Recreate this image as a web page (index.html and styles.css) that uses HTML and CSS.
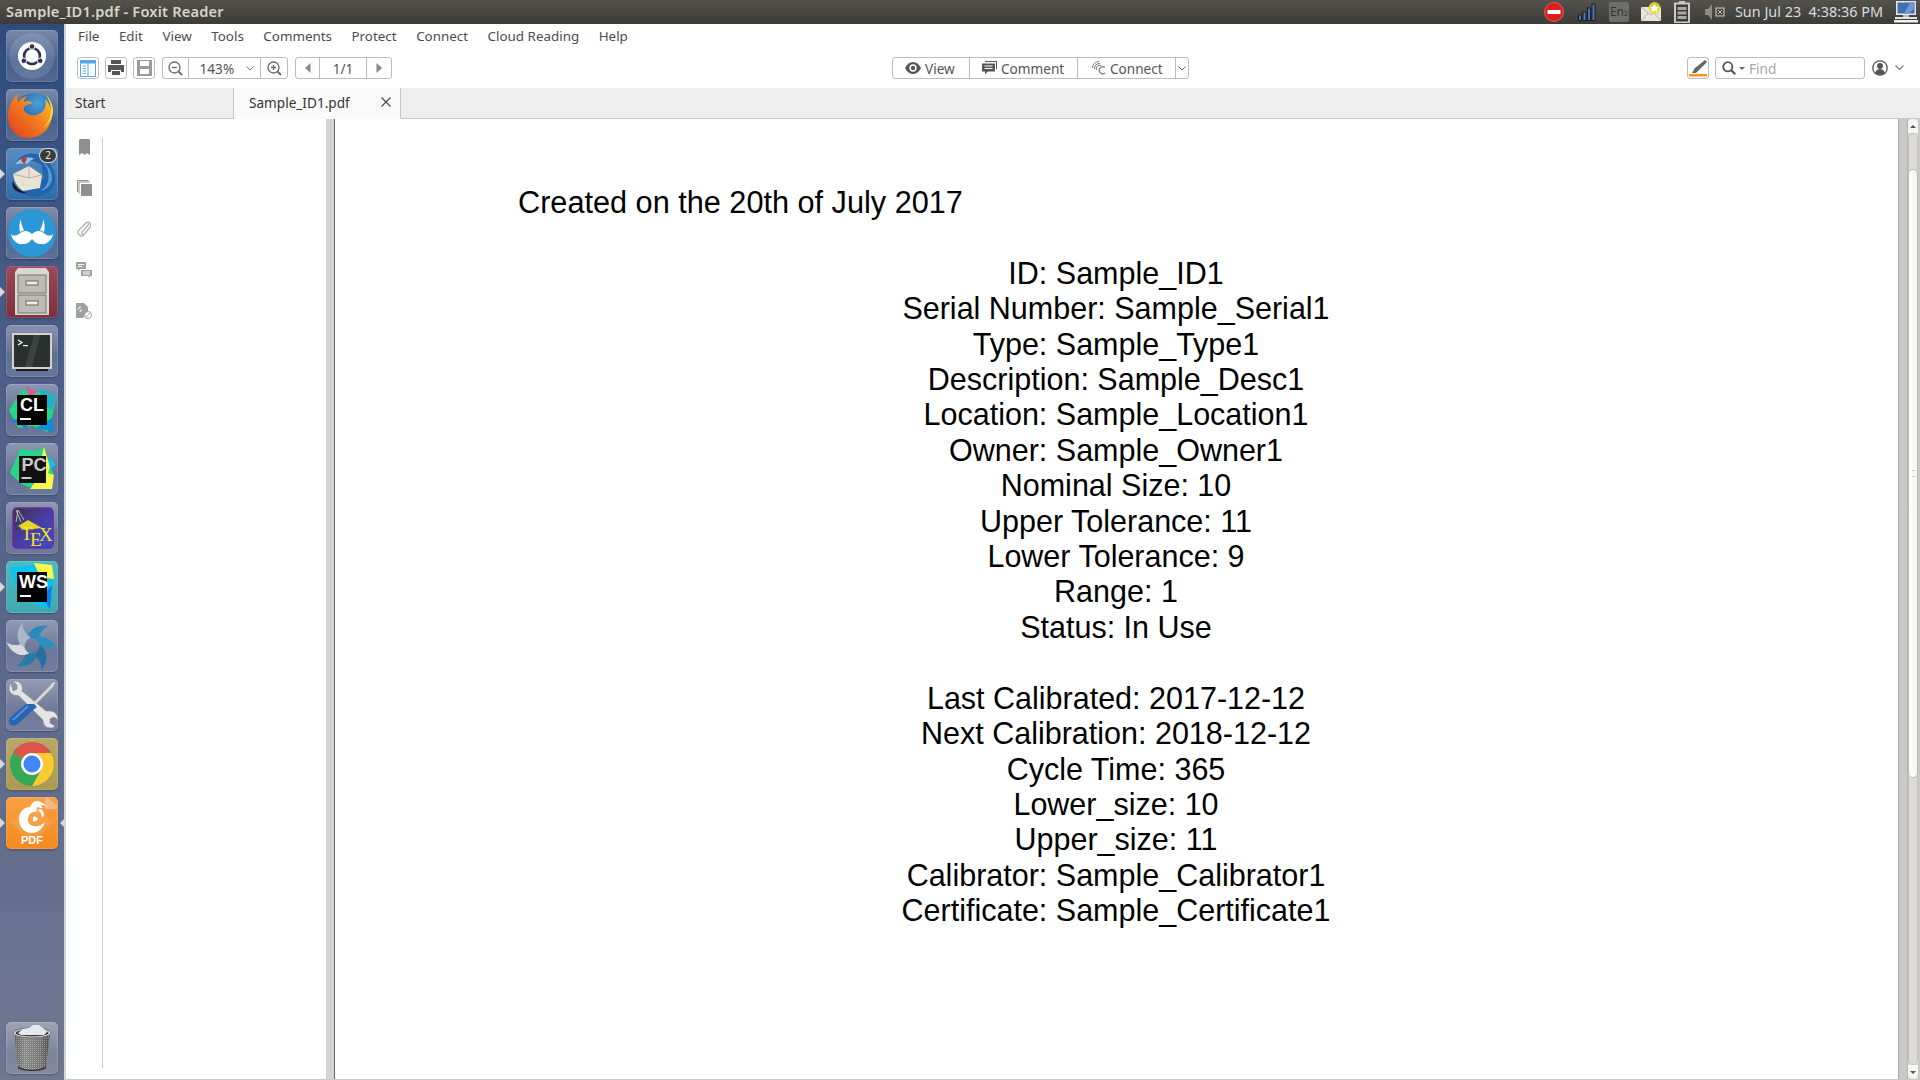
FILE: index.html
```html
<!DOCTYPE html>
<html lang="en">
<head>
<meta charset="utf-8">
<title>Sample_ID1.pdf - Foxit Reader</title>
<link rel="stylesheet" href="styles.css">
</head>
<body>
<header class="topbar">
  <div class="win-title">Sample_ID1.pdf - Foxit Reader</div>
  <div class="tray">
    <svg class="t-red" width="20" height="20" viewBox="0 0 20 20"><circle cx="10" cy="10" r="9.5" fill="#d9201f"/><circle cx="10" cy="10" r="9.5" fill="none" stroke="#f06a60" stroke-width=".8"/><rect x="3.5" y="8" width="13" height="4" fill="#fff"/></svg>
    <svg class="t-signal" width="18" height="18" viewBox="0 0 18 18"><g fill="#4a76b8" stroke="#101010" stroke-width=".8"><rect x=".5" y="12" width="3" height="5.5"/><rect x="5" y="9" width="3" height="8.5"/><rect x="9.5" y="5" width="3" height="12.5"/><rect x="14" y="1" width="3" height="16.5"/></g></svg>
    <div class="t-lang">En<span class="t-sub">2</span></div>
    <svg class="t-mail" width="21" height="20" viewBox="0 0 21 20"><rect x="0" y="5" width="20" height="14" fill="#e9e6dc"/><path d="M0 5l10 8 10-8M0 19l7-8M20 19l-7-8" fill="none" stroke="#b5b2a6"/><circle cx="13.500" cy="6" r="6" fill="#e8e22a" opacity=".85"/><path d="M13.500 1.500l1.400 2.900 3.100.4-2.300 2.100.6 3.100-2.800-1.500-2.800 1.500.6-3.100-2.300-2.100 3.100-.4z" fill="#fff"/></svg>
    <svg class="t-batt" width="16" height="22" viewBox="0 0 16 22"><rect x="5" y="0" width="6" height="3" fill="#c9c9c5"/><rect x="1" y="2.500" width="14" height="19" fill="#3c3b37" stroke="#c9c9c5" stroke-width="2"/><g fill="#a8a8a4"><rect x="3.500" y="6" width="9" height="3"/><rect x="3.500" y="10.500" width="9" height="3"/><rect x="3.500" y="15" width="9" height="3"/></g></svg>
    <svg class="t-vol" width="20" height="16" viewBox="0 0 20 16"><path d="M0 5h3l4-5v16l-4-5H0z" fill="#8b8a85"/><rect x="11" y="4" width="8" height="8" fill="none" stroke="#bdbcb6" stroke-width="1.200"/><path d="M13 6l4 4M17 6l-4 4" stroke="#bdbcb6"/></svg>
    <div class="t-clock">Sun Jul 23&nbsp; 4:38:36 PM</div>
    <svg class="t-disp" width="24" height="22" viewBox="0 0 24 22"><rect x="2" y="0" width="20" height="14" fill="#e4e4e2"/><rect x="3.500" y="1.500" width="17" height="11" fill="#3f6eb4"/><path d="M10 12.500l6-11h4.500v6l-6 5z" fill="#6f97d2"/><rect x="9" y="14" width="6" height="2" fill="#bdbdb9"/><rect x="1" y="16" width="22" height="2" fill="#e4e4e2"/><rect x="0" y="19" width="24" height="2.500" fill="#f2f2f0"/></svg>
  </div>
</header>

<div class="desktop">
  <nav class="launcher">
    <div class="tile">
      <svg width="52" height="52" viewBox="0 0 52 52"><circle cx="26" cy="26" r="23" fill="#fff" opacity=".12"/><circle cx="26" cy="26" r="14" fill="#fff"/><circle cx="26" cy="26" r="8" fill="none" stroke="#2c3150" stroke-width="2.600"/><g fill="#2c3150" stroke="#fff" stroke-width="1"><circle cx="26" cy="16.500" r="2.800"/><circle cx="17.800" cy="30.800" r="2.800"/><circle cx="34.200" cy="30.800" r="2.800"/></g></svg>
    </div>
    <div class="tile">
      <svg width="52" height="52" viewBox="0 0 52 52"><defs><linearGradient id="ffx" x1="0" y1="1" x2="1" y2="0"><stop offset="0" stop-color="#dd3a1c"/><stop offset=".55" stop-color="#f4801f"/><stop offset="1" stop-color="#ffcf2e"/></linearGradient><radialGradient id="ffg" cx=".6" cy=".25" r=".8"><stop offset="0" stop-color="#4aa0d8"/><stop offset="1" stop-color="#12408a"/></radialGradient></defs><circle cx="28" cy="24" r="20" fill="url(#ffg)"/><path d="M12 5c-1 3-1 6 0 8 2-3 5-5 9-6-2 2-3 4-3 6 3-2 6-1 9 1-2 1-7 1-9 4-1 3 1 7 7 8 5 1 10-1 13-5 2-3 2-7 1-11 4 4 7 10 7 16 0 13-11 23-24 23C9 49 2 38 2 27 2 18 6 10 12 5z" fill="url(#ffx)"/><path d="M40 6c4 4 8 11 7 18-1 7-5 12-10 15 5-5 8-11 8-17 0-6-2-11-5-16z" fill="#ffd330"/></svg>
    </div>
    <div class="tile tile-bird pip-left">
      <div class="badge">2</div>
      <svg width="52" height="52" viewBox="0 0 52 52"><path d="M9 16C14 6 26 3 35 8c10 5 15 16 14 26-2 9-10 14-19 15-7 0-13-2-18-7l18-2 8-10-3-14-14-5z" fill="#2165ad"/><path d="M35 13c6 4 9 12 7 20-1 5-5 8-8 10 6-1 10-5 12-11 1-7-4-16-11-19z" fill="#5a9ad6"/><path d="M9 16c5-6 13-8 20-5-3 0-6 2-8 5-4-1-8 0-12 0z" fill="#8fc3ea"/><path d="M15 10c2-1 5-1 6 1-1 1-2 3-2 5l-3-2z" fill="#c23a33"/><path d="M7 26l16-8 13 9-2 13-17 3c-6-4-9-10-10-17z" fill="#e8e3d4"/><path d="M7 26l16 4 13-3M23 18v12" fill="none" stroke="#b4ae9b"/><path d="M7 33c2 6 8 11 15 12-6 1-11-1-14-4-2-3-2-5-1-8z" fill="#1d1d20"/></svg>
    </div>
    <div class="tile">
      <svg width="52" height="52" viewBox="0 0 52 52"><circle cx="26" cy="26" r="24" fill="#2b97d6"/><path d="M26 27C22 23 17 23 13 27 10 29 7 29 5 27 6 33 11 38 17 37 21 37 24 35 26 32 28 35 31 37 35 37 41 38 46 33 47 27 45 29 42 29 39 27 35 23 30 23 26 27z" fill="#fff"/><path d="M15 12C13 17 13 21 14 25L18 23C16 20 15 16 15 12zM37 12C39 17 39 21 38 25L34 23C36 20 37 16 37 12z" fill="#fff"/></svg>
    </div>
    <div class="tile tile-files pip-left">
      <svg width="52" height="52" viewBox="0 0 52 52"><path d="M12 2h28l3 4v43H9V6z" fill="#d8d8d2"/><rect x="12" y="9" width="28" height="18" fill="#bcbcb4" stroke="#77776f"/><rect x="12" y="29" width="28" height="18" fill="#bcbcb4" stroke="#77776f"/><rect x="20" y="15" width="12" height="4" fill="#ecece8" stroke="#66665f"/><rect x="20" y="35" width="12" height="4" fill="#ecece8" stroke="#66665f"/></svg>
    </div>
    <div class="tile">
      <svg width="52" height="52" viewBox="0 0 52 52"><rect x="6" y="8" width="40" height="36" fill="#d2d2ce"/><rect x="8" y="10" width="36" height="32" fill="#2a302e"/><path d="M28 10h6L26 42h-7z" fill="#3d4441"/><path d="M12 15l4 2.500-4 2.500" fill="none" stroke="#fff" stroke-width="1.200"/><rect x="17" y="20" width="5" height="1.200" fill="#fff"/><rect x="10" y="44" width="32" height="2" fill="#1e1e1e"/></svg>
    </div>
    <div class="tile">
      <svg width="52" height="52" viewBox="0 0 52 52"><path d="M16 6l14 2 20 4-4 22-4 14-16-6-14 2L3 26z" fill="#21d789"/><path d="M20 2l10 6-6 8z" fill="#e0568c"/><path d="M34 4l16 8-4 14-10-6z" fill="#1fb3c7"/><path d="M4 36l16 8 6-10z" fill="#087cfa"/><path d="M30 44l18 4-2-14z" fill="#0a90d8"/><rect x="11" y="11" width="30" height="30" fill="#000"/><text x="14" y="27" class="jb">CL</text><rect x="14" y="34" width="11" height="2" fill="#fff"/></svg>
    </div>
    <div class="tile">
      <svg width="52" height="52" viewBox="0 0 52 52"><path d="M14 6l16 2 8-4 6 18 4 10-6 14-20-2-8-4L4 30z" fill="#21d789"/><path d="M38 4l6 20-2 6 6 2-2 14-22 0 6-8z" fill="#fcf84a"/><path d="M42 12l8 10-6 4z" fill="#07c3f2"/><rect x="13" y="13" width="27" height="27" fill="#111"/><text x="15.500" y="28" class="jb jb-grey">PC</text><rect x="15.500" y="34" width="10" height="2" fill="#c9c9c9"/></svg>
    </div>
    <div class="tile">
      <svg width="52" height="52" viewBox="0 0 52 52"><defs><linearGradient id="tex" x1="0" y1="0" x2="1" y2="1"><stop offset="0" stop-color="#37343a"/><stop offset=".5" stop-color="#4a3ba8"/><stop offset="1" stop-color="#3b4ed0"/></linearGradient></defs><rect x="7" y="6" width="40" height="40" rx="4" fill="url(#tex)" stroke="#6a2a9a" stroke-width="1.500"/><path d="M12 24l10-6 14 8-18 2z" fill="#e9d52a"/><path d="M10 8l5 12M10 20l2-12 6 10" fill="none" stroke="#bbb" stroke-width="1"/><text x="15" y="38" class="tex">T</text><text x="24" y="44" class="tex">E</text><text x="33" y="39" class="tex">X</text></svg>
    </div>
    <div class="tile tile-ws pip-left">
      <svg width="52" height="52" viewBox="0 0 52 52"><path d="M4 6l28-2 16 6-2 14-6 24-12-6-14-2z" fill="#07c3f2"/><path d="M28 2l18 2 2 14-14-2z" fill="#fcf84a"/><path d="M36 36l10-12-2 24z" fill="#087cfa"/><rect x="11" y="11" width="30" height="30" fill="#000"/><text x="13" y="27" class="jb">WS</text><rect x="14" y="34" width="11" height="2" fill="#fff"/></svg>
    </div>
    <div class="tile">
      <svg width="52" height="52" viewBox="0 0 52 52"><g transform="translate(26 26)"><path d="M-5 -6C-5 -15 4 -22 16 -20 10 -17 7 -12 7 -5 3 -8 -1 -8 -5 -6z" fill="#2c88ba"/><path d="M-5 -6C-5 -15 4 -22 16 -20 10 -17 7 -12 7 -5 3 -8 -1 -8 -5 -6z" fill="#2c8fc2" transform="rotate(60)"/><path d="M-5 -6C-5 -15 4 -22 16 -20 10 -17 7 -12 7 -5 3 -8 -1 -8 -5 -6z" fill="#246f9f" transform="rotate(120)"/><path d="M-5 -6C-5 -15 4 -22 16 -20 10 -17 7 -12 7 -5 3 -8 -1 -8 -5 -6z" fill="#2a7aa8" transform="rotate(180)"/><path d="M-5 -6C-5 -15 4 -22 16 -20 10 -17 7 -12 7 -5 3 -8 -1 -8 -5 -6z" fill="#d8dae0" transform="rotate(240)"/><path d="M-5 -6C-5 -15 4 -22 16 -20 10 -17 7 -12 7 -5 3 -8 -1 -8 -5 -6z" fill="#a9b8c8" transform="rotate(300)"/></g></svg>
    </div>
    <div class="tile">
      <svg width="52" height="52" viewBox="0 0 52 52"><path d="M5 4C2 8 3 13 6 15c3 2 5 1 7 2l24 24c0 5 3 8 8 8 2 0 3-1 4-2l-5-3 0-4 4-2 4 3c0-5-3-9-8-9-2 0-3 0-4 0L16 12c1-3 0-7-3-9-2-1-4-1-6-1l4 4v4l-4 2z" fill="#e4e4e4" stroke="#8a8a92" stroke-width=".6"/><path d="M46 5l2 2-20 20-2-2z" fill="#d8d8cf"/><path d="M45 6l3-3 1 1-3 3z" fill="#f4f4f0"/><path d="M28 25l3 3-4 3-15 14c-3 2-6 2-8 0s-1-5 1-7l15-13z" fill="#2a64b4"/><path d="M7 41l15-14" stroke="#6d9bdc" stroke-width="1.600"/></svg>
    </div>
    <div class="tile tile-chrome pip-left">
      <svg width="52" height="52" viewBox="0 0 52 52"><circle cx="26" cy="26" r="22" fill="#34a853"/><path d="M26 4A22 22 0 0 1 45 15H26A11 11 0 0 0 16.500 20.500L7 15A22 22 0 0 1 26 4z" fill="#dc5548"/><path d="M45 15A22 22 0 0 1 26 48L35.500 31.500A11 11 0 0 0 26 15z" fill="#fcc934"/><circle cx="26" cy="26" r="11" fill="#fff"/><circle cx="26" cy="26" r="8.500" fill="#4285f4"/></svg>
    </div>
    <div class="tile tile-foxit pip-left pip-right">
      <svg width="52" height="52" viewBox="0 0 52 52"><path d="M39 1h4l8 8v3h-12z" fill="#f3b988"/><path d="M26 5L47 26 26 47 5 26z" fill="#ffffff" opacity=".1"/><path d="M24 10c-7 0-11 6-11 12 0 9 7 15 14 14 6-1 10-5 12-11-3 3-7 5-11 4-4 0-7-4-6-8 1-5 5-7 9-6-1-2-1-3 1-5 2 1 3 1 5 1-2-1-2-2-1-3 2 0 4 1 5 2-2-3-6-6-11-6-2 0-4 2-6 6z" fill="#fff"/><path d="M31 13c3 1 5 4 5 8l2-3c0-2-1-5-3-6zM27 20c2-1 4 0 5 2-1 2-3 3-5 2z" fill="#fff"/><text x="26" y="46.500" class="pdf">PDF</text></svg>
    </div>
    <div class="tile tile-trash">
      <svg width="52" height="52" viewBox="0 0 52 52"><defs><pattern id="mesh" width="2" height="2" patternUnits="userSpaceOnUse"><rect width="2" height="2" fill="#000" opacity=".32"/><rect width="1" height="1" fill="#fff" opacity=".35"/></pattern><linearGradient id="can" x1="0" x2="1"><stop offset="0" stop-color="#8f8f8f"/><stop offset=".3" stop-color="#c8c8c8"/><stop offset=".7" stop-color="#b0b0b0"/><stop offset="1" stop-color="#6f6f6f"/></linearGradient></defs><path d="M8 11l4 33c4 5 24 5 28 0l4-33z" fill="url(#can)"/><path d="M8 11l4 33c4 5 24 5 28 0l4-33z" fill="url(#mesh)"/><path d="M12 44c4 5 24 5 28 0v2c-4 4-24 4-28 0z" fill="#2a2a2a"/><ellipse cx="26" cy="11" rx="19" ry="5" fill="#e0e0e0" stroke="#6d6d6d"/><ellipse cx="26" cy="11" rx="16.500" ry="3.500" fill="#3f3f3f"/><path d="M12 11l5-4 6-1 4-3 6 0 5 4 3 3-3 3H15z" fill="#e2e9f5"/></svg>
    </div>
  </nav>

  <main class="app">
    <div class="menubar">
      <span class="menu-item">File</span><span class="menu-item">Edit</span><span class="menu-item">View</span><span class="menu-item">Tools</span><span class="menu-item">Comments</span><span class="menu-item">Protect</span><span class="menu-item">Connect</span><span class="menu-item">Cloud Reading</span><span class="menu-item">Help</span>
    </div>

    <div class="toolbar">
      <div class="tool-left">
        <div class="btn btn-sq">
          <svg width="16" height="17" viewBox="0 0 16 17"><rect x=".5" y=".5" width="15" height="16" fill="#fff" stroke="#5aa7ee"/><rect x="1" y="1" width="14" height="2.500" fill="#5aa7ee"/><path d="M8 1v15" stroke="#5aa7ee"/><path d="M3 6h3M3 8.500h3M3 11h3M3 13.500h3" stroke="#5aa7ee"/></svg>
        </div>
        <div class="btn btn-sq">
          <svg width="16" height="16" viewBox="0 0 16 16"><path d="M3 0h10v4H3z" fill="#555"/><path d="M0 5h16v7h-3v-2H3v2H0z" fill="#555"/><rect x="4" y="11" width="8" height="4" fill="#555"/></svg>
        </div>
        <div class="btn btn-sq">
          <svg width="15" height="16" viewBox="0 0 15 16"><path d="M0 0h15v16H0z" fill="#9a9a9a"/><rect x="3" y="1" width="9" height="5" fill="#fff"/><rect x="3" y="9" width="9" height="5" fill="#fff"/></svg>
        </div>
        <div class="btn-group zoom-group">
          <div class="seg seg-zoom">
            <svg width="15" height="15" viewBox="0 0 15 15"><circle cx="6.500" cy="6.500" r="5.500" fill="none" stroke="#666" stroke-width="1.300"/><path d="M10.500 10.500l3.500 3.500" stroke="#666" stroke-width="1.800"/><path d="M4 6.500h5" stroke="#666" stroke-width="1.300"/></svg>
          </div>
          <div class="seg seg-pct"><span>143%</span><svg class="chev" width="8" height="5" viewBox="0 0 8 5"><path d="M.5.500L4 4 7.500.5" fill="none" stroke="#777"/></svg></div>
          <div class="seg seg-zoom">
            <svg width="15" height="15" viewBox="0 0 15 15"><circle cx="6.500" cy="6.500" r="5.500" fill="none" stroke="#666" stroke-width="1.300"/><path d="M10.500 10.500l3.500 3.500" stroke="#666" stroke-width="1.800"/><path d="M4 6.500h5M6.500 4v5" stroke="#666" stroke-width="1.300"/></svg>
          </div>
        </div>
        <div class="btn-group page-group">
          <div class="seg seg-nav"><svg width="6" height="10" viewBox="0 0 6 10"><path d="M5.500 0v10L0 5z" fill="#888"/></svg></div>
          <div class="seg seg-page">1/1</div>
          <div class="seg seg-nav"><svg width="6" height="10" viewBox="0 0 6 10"><path d="M.5 0v10L6 5z" fill="#888"/></svg></div>
        </div>
      </div>

      <div class="btn-group mode-group">
        <div class="seg seg-view">
          <svg width="16" height="12" viewBox="0 0 16 12"><path d="M0 6c2-4 5-6 8-6s6 2 8 6c-2 4-5 6-8 6S2 10 0 6z" fill="#555"/><circle cx="8" cy="6" r="3.700" fill="#fff"/><circle cx="8" cy="6" r="2.200" fill="#555"/></svg>
          <span>View</span>
        </div>
        <div class="seg seg-comment">
          <svg width="15" height="14" viewBox="0 0 15 14"><path d="M3 0h12v8h-1V1H3z" fill="#555"/><path d="M0 2.500h13v8H6l-3 3v-3H0z" fill="#555"/><path d="M2.500 5h8M2.500 7.500h8" stroke="#fff"/></svg>
          <span>Comment</span>
        </div>
        <div class="seg seg-connect">
          <svg width="14" height="14" viewBox="0 0 14 14"><g fill="none" stroke="#777"><path d="M.5 7A6.500 6.500 0 0 1 7 .5"/><path d="M2.500 8A5 5 0 0 1 8 2.500"/><path d="M4.500 9A3.500 3.500 0 0 1 9 4.500"/><path d="M13 6.500a3.500 3.500 0 1 0 0 5.500" stroke-width="1.200"/></g></svg>
          <span>Connect</span>
        </div>
        <div class="seg seg-caret"><svg width="8" height="5" viewBox="0 0 8 5"><path d="M.5.500L4 4 7.500.5" fill="none" stroke="#666"/></svg></div>
      </div>

      <div class="tool-right">
        <div class="btn btn-mark">
          <svg width="18" height="17" viewBox="0 0 18 17"><path d="M16 0l2 2-9 9-3 1-1-2 1-2z" fill="#666"/><path d="M6 8l3 3-2 2H3z" fill="#666"/><rect x="0" y="14" width="18" height="2.500" fill="#f7931e"/></svg>
        </div>
        <div class="find">
          <svg width="14" height="14" viewBox="0 0 14 14"><circle cx="5.800" cy="5.800" r="4.600" fill="none" stroke="#555" stroke-width="1.800"/><path d="M9.300 9.300l4 4" stroke="#555" stroke-width="2.200"/></svg>
          <svg class="find-caret" width="6" height="3" viewBox="0 0 6 3"><path d="M0 0h6L3 3z" fill="#666"/></svg>
          <span class="find-text">Find</span>
        </div>
        <svg class="avatar" width="16" height="16" viewBox="0 0 16 16"><circle cx="8" cy="8" r="7.200" fill="#fff" stroke="#555" stroke-width="1.300"/><circle cx="8" cy="6" r="3" fill="#555"/><path d="M3 13c1-3 3-4 5-4s4 1 5 4c-3 2.500-7 2.500-10 0z" fill="#555"/></svg>
        <svg class="avatar-chev" width="9" height="6" viewBox="0 0 9 6"><path d="M.5.500l4 4 4-4" fill="none" stroke="#777" stroke-width="1.100"/></svg>
      </div>
    </div>

    <div class="tabs">
      <div class="tab tab-start">Start</div>
      <div class="tab tab-doc"><span>Sample_ID1.pdf</span>
        <svg width="10" height="10" viewBox="0 0 10 10"><path d="M.5.500l9 9M9.500.5l-9 9" stroke="#444" stroke-width="1.100"/></svg>
      </div>
    </div>

    <div class="workspace">
      <aside class="rail">
        <div class="rail-icon"><svg width="11" height="16" viewBox="0 0 11 16"><path d="M1 0h9l1 1v15l-3-2-2.500 2L3 14l-3 2V1z" fill="#8f8f8f"/></svg></div>
        <div class="rail-icon"><svg width="15" height="16" viewBox="0 0 15 16"><path d="M.5 12V.5h11M2 13.500V2h11" fill="none" stroke="#8f8f8f"/><rect x="4" y="4" width="11" height="12" fill="#8f8f8f"/></svg></div>
        <div class="rail-icon"><svg width="14" height="16" viewBox="0 0 14 16"><path d="M12 4L5 12c-1 2 1 3 2.500 2l5.500-7c2-3-1-6-4-4L2 10c-3 3 2 8 5 5" fill="none" stroke="#b0b0b0" stroke-width="1.300" transform="translate(0 -1)"/></svg></div>
        <div class="rail-icon"><svg width="16" height="16" viewBox="0 0 16 16"><path d="M0 0h10v7H4l-2 2V7H0z" fill="#a0a0a0"/><path d="M5 8h11v6h-2v2l-2-2H5z" fill="#a0a0a0"/><path d="M2 2.500h6M2 4.500h4M7 10h7M7 12h7" stroke="#fff"/></svg></div>
        <div class="rail-icon"><svg width="16" height="16" viewBox="0 0 16 16"><path d="M0 0h8l4 4v5l-5 6H0z" fill="#a0a0a0"/><path d="M2 7a3 3 0 0 1 3-3M4 9a2 2 0 0 1 2-2" fill="none" stroke="#fff"/><circle cx="12" cy="12" r="3.500" fill="#fff" stroke="#a0a0a0"/><path d="M10 14l4-4" stroke="#a0a0a0"/></svg></div>
      </aside>
      <div class="panel"></div>
      <div class="splitter"></div>
      <section class="page">
        <div class="doc">
          <p class="doc-title">Created on the 20th of July 2017</p>
          <p class="doc-blank">&nbsp;</p>
          <p>ID: Sample_ID1</p>
          <p>Serial Number: Sample_Serial1</p>
          <p>Type: Sample_Type1</p>
          <p>Description: Sample_Desc1</p>
          <p>Location: Sample_Location1</p>
          <p>Owner: Sample_Owner1</p>
          <p>Nominal Size: 10</p>
          <p>Upper Tolerance: 11</p>
          <p>Lower Tolerance: 9</p>
          <p>Range: 1</p>
          <p>Status: In Use</p>
          <p class="doc-blank">&nbsp;</p>
          <p>Last Calibrated: 2017-12-12</p>
          <p>Next Calibration: 2018-12-12</p>
          <p>Cycle Time: 365</p>
          <p>Lower_size: 10</p>
          <p>Upper_size: 11</p>
          <p>Calibrator: Sample_Calibrator1</p>
          <p>Certificate: Sample_Certificate1</p>
        </div>
      </section>
      <div class="scrollbar">
        <div class="scroll-track">
          <div class="scroll-btn scroll-up"><svg width="6" height="3" viewBox="0 0 6 3"><path d="M3 0l3 3H0z" fill="#555"/></svg></div>
          <div class="scroll-trough"><div class="scroll-thumb"><span class="grip"></span></div></div>
          <div class="scroll-btn scroll-down"><svg width="6" height="3" viewBox="0 0 6 3"><path d="M0 0h6L3 3z" fill="#555"/></svg></div>
        </div>
      </div>
    </div>
  </main>
</div>
</body>
</html>
```

FILE: styles.css
```css
* { box-sizing: border-box; }

html, body {
  margin: 0;
  width: 1920px;
  height: 1080px;
  overflow: hidden;
  background: #fff;
  font-family: "Noto Sans", "Open Sans", sans-serif;
}

/* Top panel */
.topbar {
  height: 24px;
  display: flex;
  align-items: center;
  justify-content: space-between;
  background: linear-gradient(#54524b, #3c3b37);
  color: #dfdbd2;
}
.win-title {
  padding: 0 0 2px 6px;
  font-size: 14.6px;
  font-weight: 600;
  letter-spacing: .2px;
  color: #d8d4ca;
}
.tray {
  display: flex;
  align-items: center;
  padding-right: 2px;
}
.t-signal { margin-left: 14px; }
.t-lang {
  margin-left: 13px;
  width: 20px;
  height: 20px;
  border-radius: 2px;
  background: #6e6e6a;
  color: #33332f;
  font-size: 12px;
  line-height: 20px;
  text-align: center;
}
.t-sub { font-size: 7px; }
.t-mail { margin-left: 12px; }
.t-batt { margin-left: 12px; }
.t-vol { margin-left: 15px; }
.t-clock {
  margin-left: 10px;
  padding-bottom: 1px;
  font-size: 14.4px;
  white-space: nowrap;
  color: #d8dde0;
}
.t-disp { margin-left: 11px; }

/* Layout */
.desktop {
  display: flex;
  height: 1056px;
}

/* Launcher */
.launcher {
  width: 66px;
  flex: none;
  display: flex;
  flex-direction: column;
  gap: 7px;
  padding: 6px 8px 6px 6px;
  background: linear-gradient(#2f4c7e, #4f6088 35%, #6f7690);
  border-right: 2px solid #cfd5df;
}
.tile {
  position: relative;
  width: 52px;
  height: 52px;
  flex: none;
  border-radius: 5px;
  background: linear-gradient(rgba(255,255,255,.34), rgba(255,255,255,.1) 60%, rgba(255,255,255,.14));
  box-shadow: inset 0 0 0 1px rgba(255,255,255,.14), 0 1px 2px rgba(0,0,0,.25);
}
.tile svg { display: block; }
.tile-bird { background: linear-gradient(#5a8cc0, #2e6bac); }
.tile-files { background: linear-gradient(#9a4a58, #7e2f40); }
.tile-ws { background: linear-gradient(#4bbcc2, #3fa8ae); }
.tile-chrome { background: linear-gradient(#b9a869, #ab9a52); }
.tile-foxit { background: linear-gradient(#f9a043, #f58a20); }
.tile-trash { margin-top: auto; }
.pip-left::before,
.pip-right::after {
  content: "";
  position: absolute;
  top: 21px;
  border-style: solid;
  border-color: transparent;
  border-width: 5px;
}
.pip-left::before {
  left: -6px;
  border-left-color: #d8d9dc;
}
.pip-right::after {
  right: -7px;
  border-right-color: #d8d9dc;
}
.badge {
  position: absolute;
  top: 1px;
  right: 2px;
  width: 16px;
  height: 13px;
  border-radius: 7px;
  background: #3a3a3a;
  box-shadow: 0 0 0 1px #d8d8d8;
  color: #eee;
  font-size: 10px;
  line-height: 13px;
  text-align: center;
  z-index: 1;
}
.jb {
  font-family: "Liberation Sans", sans-serif;
  font-weight: 700;
  font-size: 18px;
  fill: #fff;
}
.jb-grey { fill: #c9c9c9; }
.tex {
  font-family: "Liberation Serif", serif;
  font-size: 19px;
  fill: #f1e324;
}
.pdf {
  font-family: "Liberation Sans", sans-serif;
  font-weight: 700;
  font-size: 11px;
  fill: #fff;
  text-anchor: middle;
}

/* App */
.app {
  flex: 1;
  min-width: 0;
  display: flex;
  flex-direction: column;
}
.menubar {
  height: 24px;
  display: flex;
  align-items: center;
  gap: 19.5px;
  padding: 0 0 1px 12px;
  font-size: 13.4px;
  color: #4c4c4c;
}
.toolbar {
  height: 40px;
  display: flex;
  align-items: flex-start;
  padding: 9px 16px 0 11px;
}
.tool-left {
  display: flex;
  gap: 6px;
}
.btn,
.btn-group {
  height: 22px;
  border: 1px solid #bdbdbd;
  border-radius: 3px;
  display: flex;
  align-items: center;
  color: #555;
  font-size: 13.6px;
  background: #fff;
}
.btn { justify-content: center; }
.btn-sq { width: 22px; }
.seg {
  height: 100%;
  display: flex;
  align-items: center;
  justify-content: center;
  border-right: 1px solid #bdbdbd;
}
.seg:last-child { border-right: 0; }
.seg-zoom { width: 26px; }
.seg-pct {
  width: 74px;
  justify-content: flex-start;
  padding-left: 11px;
  gap: 12px;
}
.seg-nav { width: 24px; }
.seg-page { width: 47px; }
.zoom-group {
  width: 126px;
  margin-left: 1px;
}
.page-group {
  width: 97px;
  margin-left: 1px;
}
.mode-group {
  margin-left: 500px;
  width: 297px;
}
.seg-view, .seg-comment, .seg-connect {
  gap: 4px;
  justify-content: flex-start;
}
.seg-view { width: 77px; padding-left: 12px; }
.seg-comment { width: 108px; padding-left: 12px; }
.seg-connect { width: 98px; padding-left: 14px; }
.seg-caret { flex: 1; }
.tool-right {
  margin-left: auto;
  display: flex;
  align-items: center;
}
.btn-mark { width: 22px; }
.find {
  margin-left: 6px;
  width: 150px;
  height: 22px;
  border: 1px solid #bdbdbd;
  border-radius: 3px;
  display: flex;
  align-items: center;
  padding-left: 6px;
}
.find-caret { margin-left: 3px; }
.find-text {
  margin-left: 4px;
  font-size: 13.6px;
  color: #a8a8a8;
}
.avatar { margin-left: 7px; }
.avatar-chev { margin-left: 7px; }

/* Tabs */
.tabs {
  height: 31px;
  flex: none;
  display: flex;
  background: #eeeeee;
  border-bottom: 1px solid #c6c6c6;
}
.tab {
  height: 31px;
  padding-bottom: 2px;
  display: flex;
  align-items: center;
  font-size: 13.6px;
  color: #333;
}
.tab-start {
  width: 168px;
  padding-left: 9px;
  border-right: 1px solid #c6c6c6;
}
.tab-doc {
  width: 167px;
  padding: 0 9px 2px 15px;
  justify-content: space-between;
  background: #fafafa;
  border-right: 1px solid #c6c6c6;
  border-bottom: 1px solid #fafafa;
}

/* Workspace */
.workspace {
  flex: 1;
  min-height: 0;
  display: flex;
  border-bottom: 1px solid #c9c9c9;
}
.rail {
  width: 37px;
  flex: none;
  margin: 18px 0 11px;
  display: flex;
  flex-direction: column;
  gap: 21px;
  border-right: 1px solid #cfcfcf;
}
.rail-icon {
  height: 20px;
  display: flex;
  align-items: center;
  justify-content: center;
}
.panel {
  width: 223px;
  flex: none;
}
.splitter {
  width: 9px;
  flex: none;
  background: #d4d4d4;
  border-right: 1px solid #666;
}
.page {
  flex: 1;
  min-width: 0;
  padding: 66px 0 0 183px;
  background: #fff;
}
.doc {
  width: 1196px;
  font-family: "Liberation Sans", Arial, sans-serif;
  font-size: 30.5px;
  line-height: 35.4px;
  color: #000;
  text-align: center;
}
.doc p { margin: 0; }
.doc .doc-title {
  text-align: left;
  font-size: 30.66px;
}

/* Scrollbar */
.scrollbar {
  width: 22px;
  flex: none;
  padding: 0 2px 0 8px;
  background: #c9c9c9;
  border-left: 1px solid #a8a8a8;
}
.scroll-track {
  height: 100%;
  display: flex;
  flex-direction: column;
  background: #dcdbd8;
  border-left: 1px solid #b5b5b5;
}
.scroll-btn {
  height: 14px;
  flex: none;
  display: flex;
  align-items: center;
  justify-content: center;
  background: #f6f6f5;
}
.scroll-up { border-radius: 6px 6px 0 0; }
.scroll-down { border-radius: 0 0 6px 6px; }
.scroll-trough {
  flex: 1;
  padding-top: 36px;
  background: #dcdbd8;
  border-radius: 6px;
  box-shadow: inset 0 0 0 1px #c4c4c2;
}
.scroll-thumb {
  height: 609px;
  display: flex;
  align-items: center;
  justify-content: center;
  border-radius: 6px;
  background: linear-gradient(90deg, #fff, #f4f4f2);
  box-shadow: inset 0 0 0 1px #b8b8b6;
}
.grip {
  width: 3px;
  height: 7px;
  border-top: 1px dotted #aaa;
  border-bottom: 1px dotted #aaa;
}
```
